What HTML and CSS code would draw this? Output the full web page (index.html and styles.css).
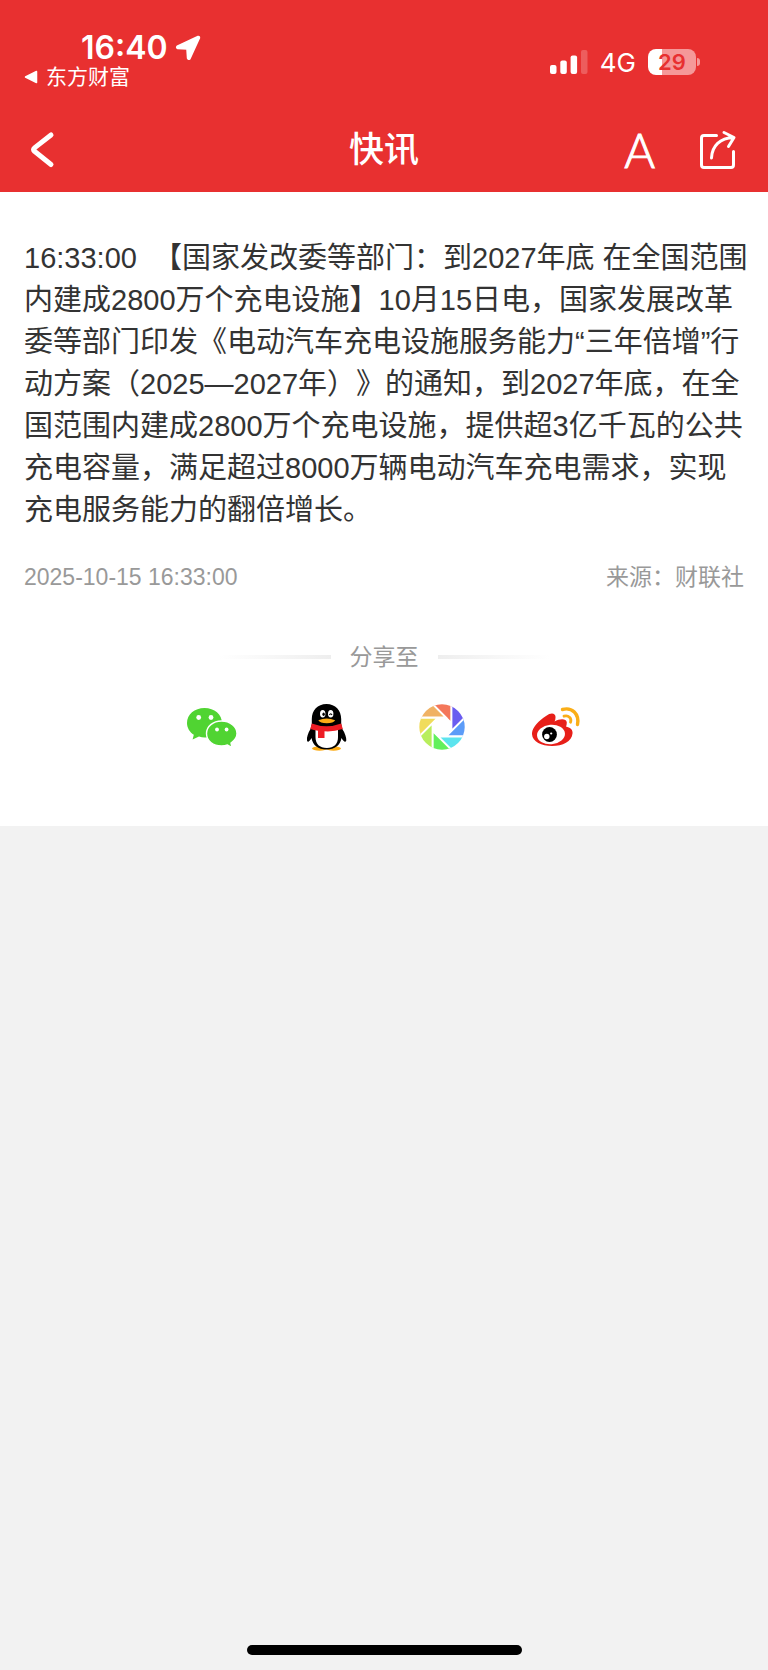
FILE: index.html
```html
<!DOCTYPE html>
<html lang="zh-CN">

<head>
    <meta charset="UTF-8">
    <meta name="viewport" content="width=device-width, initial-scale=1.0">
    <title>快讯</title>
    <link rel="stylesheet" href="styles.css">
</head>

<body>
    <header class="header">
        <div class="status">
            <div class="status_left">
                <div class="clock">
                    <span>16:40</span>
                    <svg width="26" height="26" viewBox="0 0 26 26">
                        <path d="M23 1.6L2.2 11.2Q1 12.8 2.6 13.4L12 14L12.6 23.2Q13.4 25 14.8 23.8L24.4 3Q24.6 1.2 23 1.6Z" fill="#fff" stroke="#fff" stroke-width="1.6" stroke-linejoin="round"/>
                    </svg>
                </div>
                <a class="back_app" href="#">
                    <svg width="14" height="14" viewBox="0 0 14 14">
                        <path d="M12.5 1.5v11L1.5 7z" fill="#fff" stroke="#fff" stroke-width="1.5" stroke-linejoin="round"/>
                    </svg>
                    东方财富
                </a>
            </div>
            <div class="status_right">
                <svg width="38" height="24" viewBox="0 0 38 24" fill="#fff">
                    <rect x="0" y="15" width="6.5" height="9" rx="2"/>
                    <rect x="10.3" y="10.5" width="6.5" height="13.5" rx="2"/>
                    <rect x="20.6" y="5.5" width="6.5" height="18.5" rx="2"/>
                    <rect x="31" y="0" width="6.5" height="24" rx="2" opacity=".22"/>
                </svg>
                <span class="network">4G</span>
                <div class="battery"><span>29</span></div>
            </div>
        </div>
        <nav class="nav">
            <div class="nav_side">
                <button class="icon_btn" aria-label="返回">
                    <svg width="36" height="40" viewBox="0 0 36 40" fill="none" stroke="#fff" stroke-width="5" stroke-linecap="round" stroke-linejoin="round">
                        <path d="M27 5L10.500 17.900Q8.500 19.500 10.500 21.300L27 34.500"/>
                    </svg>
                </button>
            </div>
            <h1>快讯</h1>
            <div class="nav_side nav_right">
                <button class="icon_btn font_btn" aria-label="字体大小">A</button>
                <button class="icon_btn" aria-label="分享">
                    <svg width="38" height="40" viewBox="0 0 38 40" fill="none" stroke="#fff" stroke-width="3" stroke-linecap="round" stroke-linejoin="round">
                        <path d="M17.500 5.500H5Q2.500 5.500 2.500 8V35Q2.500 37.500 5 37.500H32Q34.500 37.500 34.500 35V21.500"/>
                        <path d="M12.500 28C13 16 21 8 34.500 7.500M25 2.500L35 7.500L29.500 16.500"/>
                    </svg>
                </button>
            </div>
        </nav>
    </header>

    <main class="content">
        <p class="text">16:33:00&nbsp; 【国家发改委等部门：到2027年底 在全国范围内建成2800万个充电设施】10月15日电，国家发展改革委等部门印发《电动汽车充电设施服务能力“三年倍增”行动方案（2025—2027年）》的通知，到2027年底，在全国范围内建成2800万个充电设施，提供超3亿千瓦的公共充电容量，满足超过8000万辆电动汽车充电需求，实现充电服务能力的翻倍增长。</p>
        <div class="info">
            <time>2025-10-15 16:33:00</time>
            <span>来源：财联社</span>
        </div>
        <div class="share_title"><span>分享至</span></div>
        <div class="share_list">
            <a href="#" aria-label="微信">
                <svg width="50" height="50" viewBox="0 0 50 50">
                    <path d="M17.500 4C7.500 4 0 10.500 0 19C0 23.800 2.600 28 6.800 30.800L5.600 35.600L12 32.600Q15 33.600 18.500 33.500C28 33.500 35 27 35 19C35 10.500 27.500 4 17.500 4Z" fill="#50d432"/>
                    <path d="M34.500 17C26 17 19.500 22.500 19.500 29.500C19.500 37 26 42 34.500 42Q38 42 40.500 41L45 43.600L44 39C47.500 36.600 50 33.500 50 29.500C50 22.500 43 17 34.500 17Z" fill="#50d432" stroke="#fff" stroke-width="1.400"/>
                    <g fill="#fff">
                        <circle cx="11.700" cy="13.500" r="2.400"/>
                        <circle cx="24" cy="13.500" r="2.400"/>
                        <circle cx="30" cy="25.500" r="1.900"/>
                        <circle cx="39.600" cy="25.500" r="1.900"/>
                    </g>
                </svg>
            </a>
            <a href="#" aria-label="QQ">
                <svg width="50" height="50" viewBox="0 0 50 50">
                    <ellipse cx="17.500" cy="44.500" rx="7.500" ry="2.200" fill="#fcab15"/>
                    <ellipse cx="31.500" cy="44.500" rx="7.500" ry="2.200" fill="#fcab15"/>
                    <path d="M24.500 0C15.500 0 9.800 6.500 9.800 15V20L8.500 25C6 29 4.500 33.500 5 36.500Q6 40 9.500 34C11 41.500 16 45.500 24.500 45.500C33 45.500 38 41.500 39.500 34Q43 40 44.300 36.500C44.500 33.500 43 29 40.300 25L39.200 20V15C39.200 6.500 33.500 0 24.500 0Z" fill="#000"/>
                    <path d="M13.500 26H36V33C36 40 32 44 24.800 44C17.500 44 13.500 40 13.500 33Z" fill="#fff"/>
                    <ellipse cx="20.700" cy="9.800" rx="2.700" ry="3.800" fill="#fff"/>
                    <ellipse cx="28.700" cy="9.800" rx="2.700" ry="3.800" fill="#fff"/>
                    <ellipse cx="21.600" cy="10.200" rx="1.200" ry="1.700" fill="#000"/>
                    <path d="M27.500 11Q28.700 8.500 30 11" fill="none" stroke="#000" stroke-width="1.200"/>
                    <path d="M16.300 16.300Q24.500 12.500 33.200 16.300Q31.500 19.200 24.800 19.200Q18 19.200 16.300 16.300Z" fill="#fcab15"/>
                    <path d="M9.800 19.500Q24.500 25 39.200 19.500L40.800 25Q31 28 22.500 27.300V34H16V26.700Q11.500 26 8.300 25Z" fill="#ed1c24"/>
                </svg>
            </a>
            <a href="#" aria-label="朋友圈">
                <svg width="50" height="50" viewBox="-25 -23 50 50">
                    <defs>
                        <clipPath id="disc"><circle r="22.700"/></clipPath>
                        <path id="blade" d="M-10.600 -24L9.500 -3.900V-24Z"/>
                    </defs>
                    <g clip-path="url(#disc)" stroke="#fff" stroke-width="1.800">
                        <use href="#blade" fill="#f4775a"/>
                        <use href="#blade" fill="#6a5cf0" transform="rotate(45)"/>
                        <use href="#blade" fill="#5c9cf8" transform="rotate(90)"/>
                        <use href="#blade" fill="#5ce4ee" transform="rotate(135)"/>
                        <use href="#blade" fill="#62f05c" transform="rotate(180)"/>
                        <use href="#blade" fill="#b8ee5c" transform="rotate(225)"/>
                        <use href="#blade" fill="#f0dc5c" transform="rotate(270)"/>
                        <use href="#blade" fill="#f0b264" transform="rotate(315)"/>
                    </g>
                </svg>
            </a>
            <a href="#" aria-label="微博">
                <svg width="50" height="50" viewBox="0 0 50 50">
                    <path d="M14 12C19 8 24 9 23.500 13.500Q23.500 16 22.500 17.500C28 14.500 34.500 14.500 34.800 18.500Q34.800 20.500 34 22.500C38.500 23.500 41 26 40.500 29.500C40 37.500 30.500 42 20 42C9 42 -.5 37.500 0 29C.5 23 7 16.500 14 12Z" fill="#e71f19"/>
                    <ellipse cx="19" cy="30.500" rx="14" ry="9.800" fill="#fff" transform="rotate(-5 19 30.500)"/>
                    <circle cx="17.500" cy="30.500" r="7.400" fill="#000"/>
                    <circle cx="14.800" cy="32.500" r="2.700" fill="#fff"/>
                    <circle cx="19.200" cy="29.500" r="1.100" fill="#fff"/>
                    <path d="M30.500 5.500C40 2.800 47.500 10 45.500 20.500" fill="none" stroke="#faae17" stroke-width="3.400" stroke-linecap="round"/>
                    <path d="M32 12.200C36.500 11 40 14 38.500 18.200" fill="none" stroke="#faae17" stroke-width="2.800" stroke-linecap="round"/>
                </svg>
            </a>
        </div>
    </main>

    <footer class="home_bar"></footer>
</body>

</html>
```
FILE: styles.css
```css
* {
    box-sizing: border-box;
}

body {
    margin: 0;
    min-height: 100vh;
    display: flex;
    flex-direction: column;
    background: #f2f2f2;
    color: #333;
    font-family: "Liberation Sans", "Noto Sans CJK SC", sans-serif;
    text-spacing-trim: space-all;
}

a {
    color: inherit;
    text-decoration: none;
}

svg {
    display: block;
}

.header {
    background: #e83030;
    color: #fff;
}

.status {
    display: flex;
    justify-content: space-between;
    height: 106px;
    padding: 32px 72px 0 24px;
    font-family: Inter, "Noto Sans CJK SC", sans-serif;
}

.clock {
    display: flex;
    align-items: center;
    gap: 7px;
    height: 32px;
    padding-left: 57px;
    font-size: 32px;
    font-weight: 600;
    line-height: 32px;
}

.back_app {
    display: flex;
    align-items: center;
    gap: 8px;
    height: 26px;
    font-size: 21px;
    line-height: 22px;
}

.status_right {
    display: flex;
    align-items: center;
    gap: 12px;
    height: 60px;
}

.network {
    font-size: 26px;
}

.battery {
    position: relative;
    width: 48px;
    height: 26px;
    border-radius: 8px;
    background: linear-gradient(to right, #fff 14px, #f59898 14px);
    color: #e83030;
    font-size: 22px;
    font-weight: 600;
    line-height: 26px;
    text-align: center;
}

/* 电池头 */
.battery::after {
    content: "";
    position: absolute;
    top: 9px;
    right: -4px;
    width: 3px;
    height: 8px;
    border-radius: 0 4px 4px 0;
    background: #f59898;
}

.nav {
    display: flex;
    align-items: center;
    justify-content: space-between;
    height: 86px;
    padding: 2px 24px 0;
}

.nav_side {
    width: 30%;
    display: flex;
    align-items: center;
}

.nav_right {
    justify-content: flex-end;
    gap: 44px;
    padding-right: 7px;
}

.nav h1 {
    margin: 0;
    font-size: 35px;
    font-weight: 500;
    line-height: 48px;
}

.icon_btn {
    padding: 0;
    border: none;
    background: none;
    color: #fff;
    cursor: pointer;
}

.font_btn {
    height: 44px;
    font-family: Lato, sans-serif;
    font-size: 47px;
    font-weight: 300;
    line-height: 44px;
    -webkit-text-stroke: 1px #fff;
}

.content {
    padding: 45px 24px 72px;
    background: #fff;
}

.text {
    margin: 0 -4px 0 0;
    font-size: 29px;
    line-height: 42px;
}

.info {
    display: flex;
    justify-content: space-between;
    margin-top: 30px;
    color: #999;
    font-size: 23px;
    line-height: 32px;
}

.share_title {
    display: flex;
    align-items: center;
    justify-content: center;
    gap: 19px;
    margin-top: 48px;
    color: #999;
    font-size: 23px;
    line-height: 32px;
}

.share_title::before,
.share_title::after {
    content: "";
    width: 112px;
    height: 4px;
    background: linear-gradient(to right, #fff, #eee);
}

.share_title::after {
    background: linear-gradient(to left, #fff, #eee);
}

.share_list {
    display: flex;
    justify-content: center;
    gap: 65px;
    margin-top: 31px;
}

.home_bar {
    width: 275px;
    height: 10px;
    margin: auto auto 15px;
    border-radius: 5px;
    background: #000;
}
```
